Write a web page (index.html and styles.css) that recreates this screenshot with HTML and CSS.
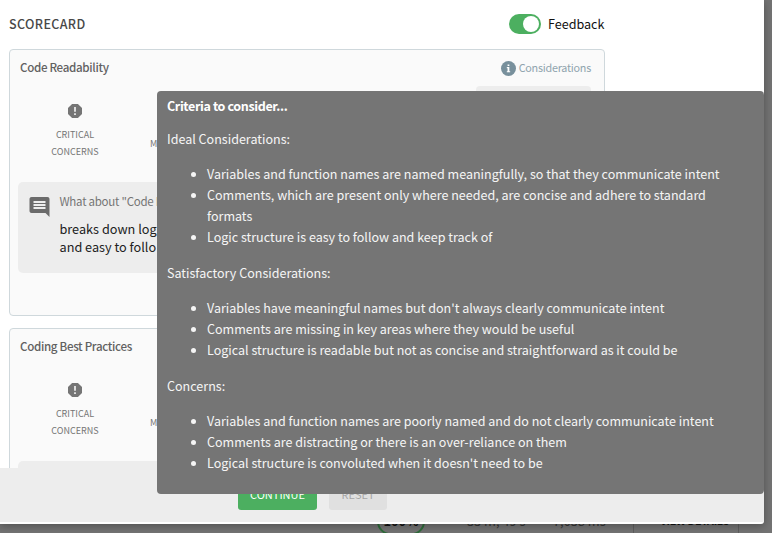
FILE: index.html
```html
<!DOCTYPE html>
<html lang="en">
<head>
<meta charset="utf-8">
<title>Scorecard</title>
<link rel="stylesheet" href="styles.css">
</head>
<body>
<div class="backdrop-row">
  <span class="score">100%</span>
  <span class="time">33 m, 49 s</span>
  <span class="speed">7,038 ms</span>
  <span class="details"><span>›</span><span>VIEW DETAILS</span></span>
</div>
<main class="modal">
  <section class="content">
    <header class="heading">
      <h1>SCORECARD</h1>
      <label class="feedback"><span class="toggle"><i></i></span><span>Feedback</span></label>
    </header>
    <article class="card first">
      <div class="card-head">
        <h2>Code Readability</h2>
        <span class="info">
          <svg viewBox="0 0 16 16" width="15" height="15"><circle cx="8" cy="8" r="8" fill="#78909c"/><path d="M6.2 6.4h2.7v4.4h.9v1.2H6.2v-1.2H7V7.6h-.8zM7 3.7h1.9v1.7H7z" fill="#fff"/></svg>
          <span>Considerations</span>
        </span>
      </div>
      <div class="ratings">
        <div class="rating">
          <svg viewBox="3 3 18 18" width="14" height="14"><path fill="#757575" d="M15.73 3H8.27L3 8.27v7.46L8.27 21h7.46L21 15.73V8.27z"/><path fill="#fafafa" d="M11 7h2v6h-2zM11 15h2v2h-2z"/></svg>
          <span>CRITICAL<br>CONCERNS</span>
        </div>
        <div class="rating minor"><span>M</span></div>
        <div class="selected"></div>
      </div>
      <div class="note">
        <svg viewBox="2 2 20 20" width="21" height="20"><path fill="#6b6b6b" d="M21.99 4c0-1.1-.89-2-1.99-2H4c-1.1 0-2 .9-2 2v12c0 1.1.9 2 2 2h14l4 4-.01-18zM18 14H6v-2h12v2zm0-3H6V9h12v2zm0-3H6V6h12v2z"/></svg>
        <div>
          <p class="question">What about "Code R</p>
          <p class="answer">breaks down log<br>and easy to follo</p>
        </div>
      </div>
    </article>
    <article class="card">
      <div class="card-head"><h2>Coding Best Practices</h2></div>
      <div class="ratings">
        <div class="rating">
          <svg viewBox="3 3 18 18" width="14" height="14"><path fill="#757575" d="M15.73 3H8.27L3 8.27v7.46L8.27 21h7.46L21 15.73V8.27z"/><path fill="#fafafa" d="M11 7h2v6h-2zM11 15h2v2h-2z"/></svg>
          <span>CRITICAL<br>CONCERNS</span>
        </div>
        <div class="rating minor"><span>M</span></div>
      </div>
      <div class="note"></div>
    </article>
  </section>
  <footer class="actions">
    <button class="continue">CONTINUE</button>
    <button class="reset">RESET</button>
  </footer>
</main>
<aside class="tooltip">
  <strong>Criteria to consider...</strong>
  <p>Ideal Considerations:</p>
  <ul>
    <li>Variables and function names are named meaningfully, so that they communicate intent</li>
    <li>Comments, which are present only where needed, are concise and adhere to standard formats</li>
    <li>Logic structure is easy to follow and keep track of</li>
  </ul>
  <p>Satisfactory Considerations:</p>
  <ul>
    <li>Variables have meaningful names but don't always clearly communicate intent</li>
    <li>Comments are missing in key areas where they would be useful</li>
    <li>Logical structure is readable but not as concise and straightforward as it could be</li>
  </ul>
  <p>Concerns:</p>
  <ul>
    <li>Variables and function names are poorly named and do not clearly communicate intent</li>
    <li>Comments are distracting or there is an over-reliance on them</li>
    <li>Logical structure is convoluted when it doesn't need to be</li>
  </ul>
</aside>
</body>
</html>
```
FILE: styles.css
```css
* { box-sizing: border-box; }
body {
  margin: 0;
  width: 772px;
  height: 533px;
  overflow: hidden;
  position: relative;
  background: #737373;
  font-family: "Noto Sans CJK JP", "Noto Sans", sans-serif;
  font-size: 12.5px;
}
h1, h2, p, ul { margin: 0; }
svg { display: block; flex: none; }
.modal {
  position: relative;
  width: 764px;
  height: 524px;
  padding-bottom: 2px;
  display: flex;
  flex-direction: column;
  overflow: hidden;
  background: #fff;
  border-radius: 0 0 3px 0;
  box-shadow: 0 2px 8px rgba(0, 0, 0, .3);
}
.content { height: 468px; padding: 0 159px 0 9px; overflow: hidden; }
.heading { height: 49px; display: flex; justify-content: space-between; align-items: center; }
h1 { padding-bottom: 2px; font-size: 12.5px; font-weight: 500; color: #484848; letter-spacing: .38px; line-height: 20px; }
.feedback { margin-right: .5px; display: flex; align-items: center; gap: 7px; font-size: 12.6px; line-height: 18px; color: #111; }
.feedback span + span { padding-bottom: 2px; }
.toggle { width: 32px; height: 20px; margin-bottom: 1px; padding: 2px; border-radius: 10px; background: #4caf60; display: flex; justify-content: flex-end; }
.toggle i { width: 16px; height: 16px; border-radius: 50%; background: #fff; }
.card {
  width: 596px;
  height: 267px;
  margin-bottom: 12px;
  padding: 8px;
  border: 1px solid #cfd8dc;
  border-radius: 4px;
  background: #fafafa;
}
.card-head { height: 20px; padding: 0 5px 0 2px; display: flex; justify-content: space-between; align-items: center; }
h2 { padding-bottom: 1px; font-size: 11.6px; font-weight: 500; letter-spacing: -.33px; color: #616161; line-height: 19px; }
.info { display: flex; align-items: center; gap: 3px; color: #90a4ae; font-size: 10.75px; letter-spacing: -.22px; line-height: 18px; }
.ratings { height: 104px; padding-top: 8px; display: flex; color: #757575; font-size: 9px; line-height: 17px; text-align: center; }
.rating { width: 114px; padding-top: 18px; display: flex; flex-direction: column; align-items: center; gap: 8px; }
.minor { align-items: flex-start; padding: 49px 0 0 18px; }
.selected { width: 115px; height: 88px; margin-left: auto; margin-right: 5px; border-radius: 4px; background: #ededed; }
.note { height: 91px; padding: 14px 11px; display: flex; gap: 9.5px; background: #ededed; border-radius: 5px; }
.note svg { margin-top: 1px; }
.note div { margin-top: -5px; }
.question { font-size: 11.5px; letter-spacing: -.25px; line-height: 20px; color: #757575; }
.answer { margin-top: 9px; font-size: 12.7px; line-height: 18px; color: #212121; }
.actions { height: 54px; padding: 0 0 12px 238px; display: flex; align-items: flex-end; gap: 12px; background: #ededed; }
.actions button { height: 32px; padding: 0; border: 0; border-radius: 3px; font: 11px/28px "Noto Sans CJK JP", sans-serif; }
.actions .continue { width: 79px; background: #4caf60; color: #fff; }
.actions .reset { width: 58px; background: #e0e0e0; color: #a6a6a6; }
.tooltip {
  position: absolute;
  left: 157px;
  top: 91px;
  width: 607px;
  height: 403px;
  padding: 4px 10px;
  border-radius: 4px;
  background: #757575;
  color: #f5f5f5;
  font-size: 12.54px;
  line-height: 21px;
}
.tooltip strong { display: block; margin-bottom: 12px; color: #fff; letter-spacing: -.38px; }
.tooltip ul { margin: 14px 0 15px; padding: 0 30px 0 40px; list-style: none; }
.tooltip li::before {
  content: "";
  display: inline-block;
  width: 5px;
  height: 5px;
  margin: 0 11px 0 -16px;
  border-radius: 50%;
  background: #f5f5f5;
  vertical-align: 2px;
}
.backdrop-row {
  position: absolute;
  left: 0;
  top: 508px;
  width: 739px;
  height: 28px;
  display: flex;
  color: #333;
  font-size: 12.8px;
  line-height: 26px;
}
.score { width: 48px; height: 27px; margin-left: 377px; border: 2px solid #2e6b3a; border-radius: 14px; color: #111; font-weight: 700; line-height: 21px; text-align: center; }
.time { width: 86px; margin-left: 42px; }
.speed { width: 80px; }
.details { flex: 1; padding-left: 14px; display: flex; gap: 9px; border-left: 1px solid #5e5e5e; border-right: 1px solid #5e5e5e; color: #111; font-size: 10.7px; font-weight: 700; line-height: 26px; letter-spacing: -.3px; }
```
